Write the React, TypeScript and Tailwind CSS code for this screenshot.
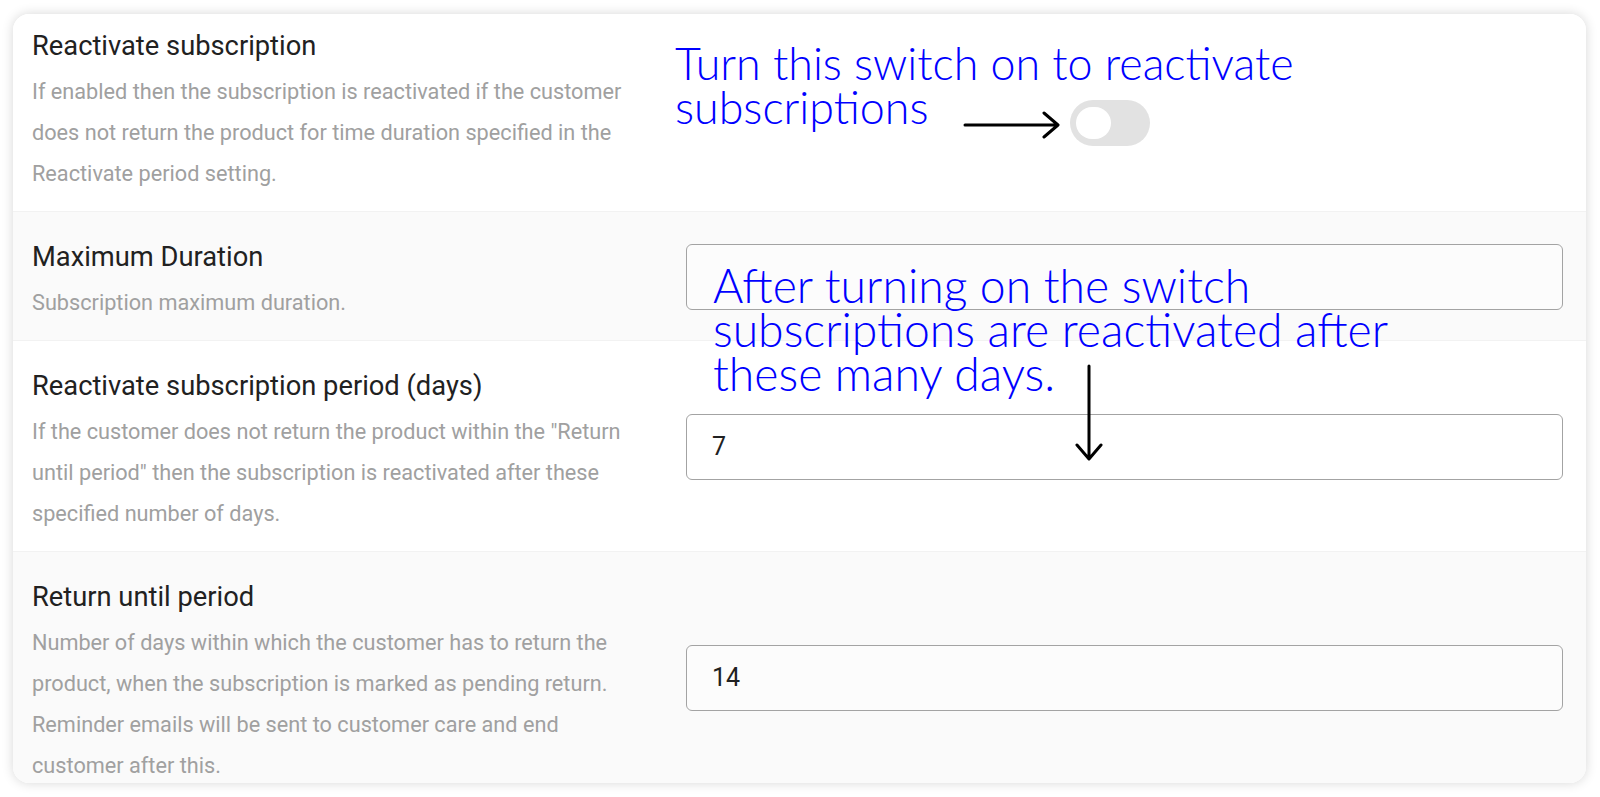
import React from 'react';

interface SettingRowProps {
    title: string;
    description: string[];
    shaded?: boolean;
    first?: boolean;
    children?: React.ReactNode;
}

const SettingRow: React.FC<SettingRowProps> = ({ title, description, shaded, first, children }) => (
    <div
        className={`flex items-center border-b border-[#f2f2f2] pl-[19px] pr-[23px] ${shaded ? 'bg-[#fafafa]' : 'bg-white'} ${first ? 'pt-[17px] pb-[17px]' : 'pt-[30px] pb-[17px]'}`}
    >
        <div className="w-[620px] shrink-0">
            <div className="text-[27.3px] leading-[30px] text-[#212121]">{title}</div>
            <div className="mt-[10px] text-[21.7px] leading-[41px] text-[#a0a0a0]">
                {description.map((line, i) => (
                    <div key={i}>{line}</div>
                ))}
            </div>
        </div>
        <div className="ml-[34px] flex-1">{children}</div>
    </div>
);

const TextInput: React.FC<{ value: string }> = ({ value }) => (
    <div className="mb-[12px] flex h-[66px] items-center rounded-[6px] border-[1.5px] border-[#a3a3a3] bg-white/40 pl-[25px] text-[25px] text-[#212121]">
        {value}
    </div>
);

const App: React.FC = () => {
    return (
        <div className="h-[797px] w-[1600px] bg-white pt-[14px] pl-[13px]" style={{ fontFamily: 'Roboto, "Noto Sans", sans-serif' }}>
            <div className="relative h-[769px] w-[1573px] overflow-hidden rounded-[16px] bg-white shadow-[0_0_12px_rgba(0,0,0,0.16)]">
                <SettingRow
                    first
                    title="Reactivate subscription"
                    description={[
                        'If enabled then the subscription is reactivated if the customer',
                        'does not return the product for time duration specified in the',
                        'Reactivate period setting.',
                    ]}
                >
                    <div className="h-[163px] pt-[69px]">
                        <div className="ml-[384px] flex h-[46px] w-[80px] items-center rounded-full bg-[#e2e2e2] pl-[6px]">
                            <div className="h-[32px] w-[35px] rounded-full bg-white" />
                        </div>
                    </div>
                </SettingRow>

                <SettingRow shaded title="Maximum Duration" description={['Subscription maximum duration.']}>
                    <TextInput value="" />
                </SettingRow>

                <SettingRow
                    title="Reactivate subscription period (days)"
                    description={[
                        'If the customer does not return the product within the "Return',
                        'until period" then the subscription is reactivated after these',
                        'specified number of days.',
                    ]}
                >
                    <TextInput value="7" />
                </SettingRow>

                <SettingRow
                    shaded
                    title="Return until period"
                    description={[
                        'Number of days within which the customer has to return the',
                        'product, when the subscription is marked as pending return.',
                        'Reminder emails will be sent to customer care and end',
                        'customer after this.',
                    ]}
                >
                    <TextInput value="14" />
                </SettingRow>

                {/* annotations */}
                <div
                    className="absolute left-[662px] top-[27px] text-[44.8px] font-light leading-[44px] text-[#0000ff]"
                    style={{ fontFamily: 'Lato, "Noto Sans", sans-serif' }}
                >
                    <div>Turn this switch on to reactivate</div>
                    <div>subscriptions</div>
                </div>
                <svg className="absolute left-[950px] top-[97px]" width="98" height="28" viewBox="0 0 98 28">
                    <path d="M2 14 H94 M81 2 L95 14 L81 26" fill="none" stroke="#000" strokeWidth="3" strokeLinecap="round" strokeLinejoin="round" />
                </svg>

                <div
                    className="absolute left-[700px] top-[249px] text-[46.3px] font-light leading-[44px] text-[#0000ff]"
                    style={{ fontFamily: 'Lato, "Noto Sans", sans-serif' }}
                >
                    <div>After turning on the switch</div>
                    <div>subscriptions are reactivated after</div>
                    <div>these many days.</div>
                </div>
                <svg className="absolute left-[1062px] top-[350px]" width="28" height="98" viewBox="0 0 28 98">
                    <path d="M14 2 V94 M2 81 L14 95 L26 81" fill="none" stroke="#000" strokeWidth="3" strokeLinecap="round" strokeLinejoin="round" />
                </svg>
            </div>
        </div>
    );
};

export default App;
